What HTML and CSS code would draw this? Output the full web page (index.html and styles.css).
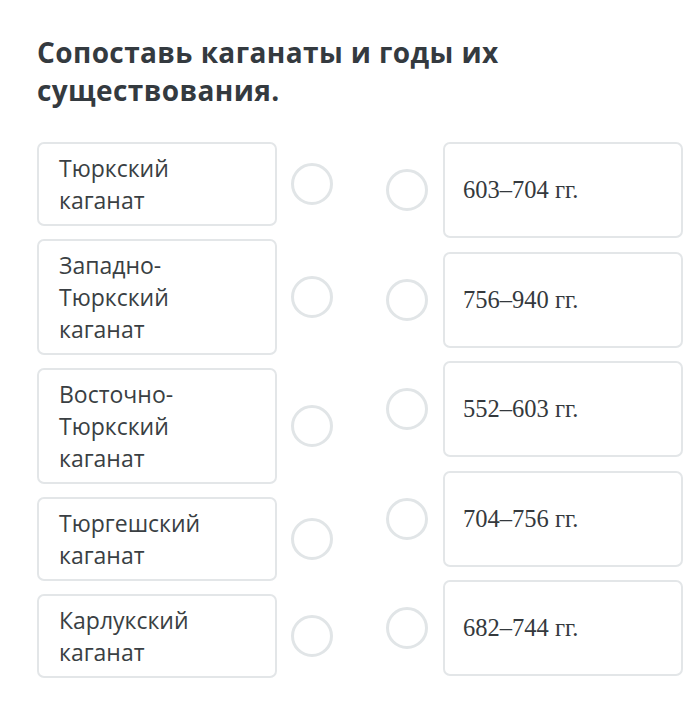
FILE: index.html
```html
<!DOCTYPE html>
<html lang="ru">
<head>
<meta charset="utf-8">
<link rel="stylesheet" href="styles.css">
</head>
<body>
<main class="page">
  <h1 class="title">Сопоставь каганаты и годы их существования.</h1>
  <div class="match">
    <div class="col col-left">
      <div class="row"><div class="card card-left">Тюркский каганат</div><span class="dot"></span></div>
      <div class="row"><div class="card card-left">Западно-<br>Тюркский каганат</div><span class="dot"></span></div>
      <div class="row"><div class="card card-left">Восточно-<br>Тюркский каганат</div><span class="dot"></span></div>
      <div class="row"><div class="card card-left">Тюргешский каганат</div><span class="dot"></span></div>
      <div class="row"><div class="card card-left">Карлукский каганат</div><span class="dot"></span></div>
    </div>
    <div class="col col-right">
      <div class="row"><span class="dot"></span><div class="card card-right">603–704 гг.</div></div>
      <div class="row"><span class="dot"></span><div class="card card-right">756–940 гг.</div></div>
      <div class="row"><span class="dot"></span><div class="card card-right">552–603 гг.</div></div>
      <div class="row"><span class="dot"></span><div class="card card-right">704–756 гг.</div></div>
      <div class="row"><span class="dot"></span><div class="card card-right">682–744 гг.</div></div>
    </div>
  </div>
</main>
</body>
</html>
```
FILE: styles.css
```css
* { box-sizing: border-box; }
html, body { margin: 0; padding: 0; background: #ffffff; }
.page {
  padding: 33px 6px 0 37px;
  font-family: "Open Sans", "Noto Sans", sans-serif;
  color: #333a3f;
}
.title {
  margin: 0 0 33px 0;
  font-size: 28px;
  line-height: 38px;
  font-weight: 700;
  letter-spacing: 0.4px;
  color: #343a3f;
  width: 520px;
}
.match {
  display: flex;
  justify-content: space-between;
}
.col {
  display: flex;
  flex-direction: column;
  gap: 13.5px;
}
.row {
  display: flex;
  align-items: center;
}
.col-left .row { gap: 14px; }
.col-right .row { gap: 15px; }
.card {
  width: 240px;
  background: #fff;
  border: 2px solid #e3e6e8;
  border-radius: 7px;
}
.card-left {
  padding: 8px 18px 7.5px 20px;
  font-size: 23px;
  line-height: 32px;
  color: #3a3f43;
}
.card-right {
  height: 96px;
  display: flex;
  align-items: center;
  padding: 0 18px;
  font-family: "Liberation Serif", "DejaVu Serif", serif;
  font-size: 24.5px;
  color: #34393d;
}
.dot {
  width: 42px;
  height: 42px;
  border: 3px solid #e1e5e7;
  border-radius: 50%;
  flex: none;
}
```
